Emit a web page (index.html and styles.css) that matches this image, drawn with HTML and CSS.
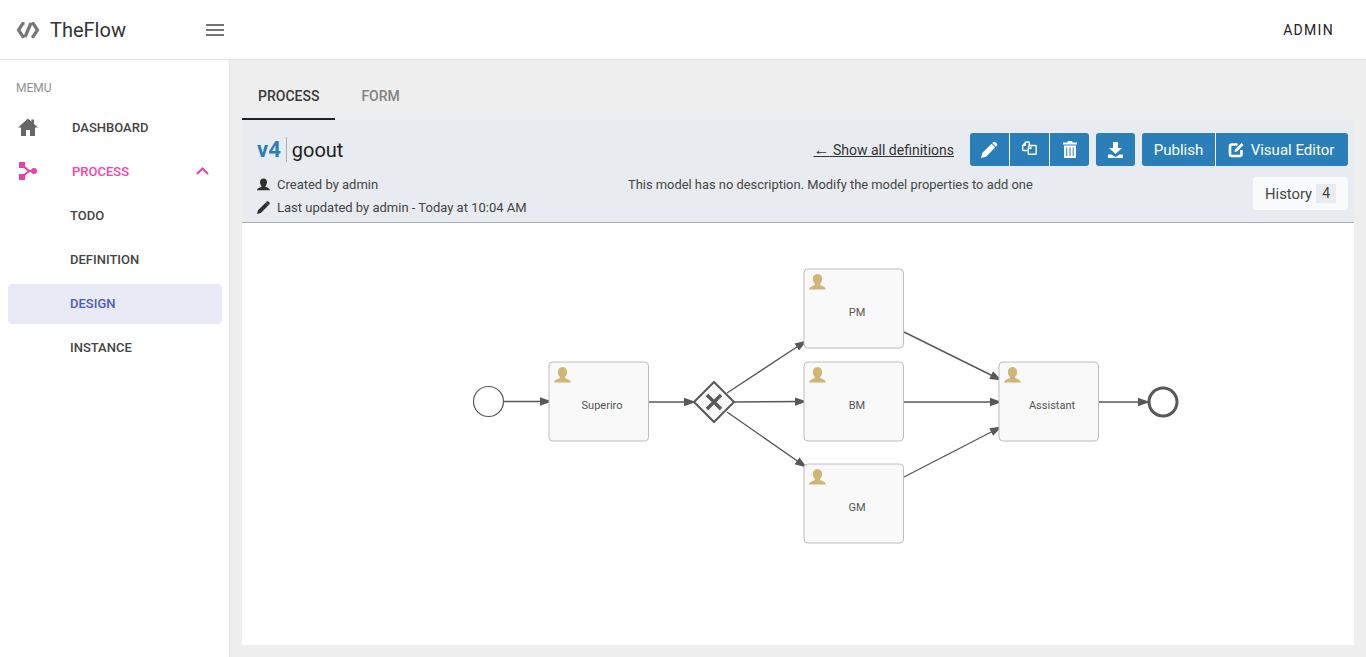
FILE: index.html
```html
<!DOCTYPE html>
<html lang="en">
<head>
<meta charset="utf-8">
<title>TheFlow</title>
<link rel="stylesheet" href="styles.css">
</head>
<body>
<svg width="0" height="0" class="defs">
  <defs>
    <marker id="arrow" viewBox="0 0 12 10" refX="11" refY="5" markerWidth="12" markerHeight="10" markerUnits="userSpaceOnUse" orient="auto">
      <path d="M0 0.8L12 5L0 9.2Z" fill="#585858"/>
    </marker>
    <g id="task-user">
      <path d="M8.5 0c3 0 4.6 2.2 4.6 5 0 2-.8 3.8-2 4.8v1.2c1.5 1 5.2 1.3 5.9 4.5H0c.7-3.2 4.4-3.5 5.9-4.5V9.8c-1.2-1-2-2.8-2-4.8 0-2.8 1.6-5 4.6-5z" fill="#d1b574"/>
    </g>
  </defs>
</svg>
<header class="topbar">
  <div class="brand">
    <svg class="logo" width="24" height="18" viewBox="0 0 24 18">
      <path d="M8.5 2.500H6.800L2.500 9l4.300 6.500h1.700M15.500 2.500h1.700L21.500 9l-4.300 6.500h-1.700" fill="none" stroke="#777" stroke-width="3.200"/>
      <path d="M15 2L9 16" fill="none" stroke="#777" stroke-width="3.200"/>
    </svg>
    <span class="brand-name">TheFlow</span>
  </div>
  <button class="burger" aria-label="menu"><span></span><span></span><span></span></button>
  <div class="user">ADMIN</div>
</header>
<div class="shell">
  <nav class="sidebar">
    <div class="menu-title">MEMU</div>
    <a class="nav-item">
      <svg class="nav-icon" width="20" height="18" viewBox="0 0 20 18"><path d="M10 .5L0 9.500h3V18h5v-6h4v6h5V9.500h3l-4-3.600V1.500h-2.500v2.200z" fill="#666"/></svg>
      <span>DASHBOARD</span>
    </a>
    <a class="nav-item nav-open">
      <svg class="nav-icon" width="20" height="20" viewBox="0 0 20 20"><path d="M4 4l7 6h6M4 16l7-6" fill="none" stroke="#ec40a4" stroke-width="2"/><rect x="1" y="1" width="6" height="6" fill="#ec40a4"/><rect x="1" y="13" width="6" height="6" fill="#ec40a4"/><circle cx="16" cy="10" r="3" fill="#ec40a4"/></svg>
      <span>PROCESS</span>
      <svg class="chevron" width="13" height="8" viewBox="0 0 13 8"><path d="M1 7l5.500-5.500L12 7" fill="none" stroke="#ec40a4" stroke-width="2"/></svg>
    </a>
    <div class="nav-subs">
      <a class="nav-sub">TODO</a>
      <a class="nav-sub">DEFINITION</a>
      <a class="nav-sub nav-active">DESIGN</a>
      <a class="nav-sub">INSTANCE</a>
    </div>
  </nav>
  <main class="main">
    <div class="tabs">
      <div class="tab tab-active">PROCESS</div>
      <div class="tab">FORM</div>
    </div>
    <section class="panel">
      <div class="panel-head">
        <div class="panel-row">
          <h1 class="title"><span class="version">v4</span><span class="name">goout</span></h1>
          <a class="back-link"><span class="arrow-glyph">←</span> Show all definitions</a>
          <div class="btn-group">
            <button class="btn btn-icon btn-narrow"><svg width="17" height="17" viewBox="0 0 17 17"><path d="M0 17l1.300-5L10.500 2.800l3.700 3.700L5 15.700zM12 1.300c.8-.8 1.700-.8 2.400-.1l1.400 1.400c.7.700.7 1.600-.1 2.400l-.8.800-3.700-3.700z" fill="#fff"/></svg></button>
            <button class="btn btn-icon btn-raised"><svg width="15" height="14" viewBox="0 0 15 14"><path d="M5.500 9.500H1.500c-.5 0-.8-.3-.8-.8V4.500L4 1h2.500c.5 0 .8.300.8.800V4" fill="none" stroke="#fff" stroke-width="1.400"/><path d="M7 4.500h6.500c.4 0 .7.300.7.700v7.300c0 .4-.3.700-.7.700h-6.500c-.4 0-.7-.3-.7-.7V7.500z" fill="none" stroke="#fff" stroke-width="1.400"/><path d="M1 5h3V1.500z" fill="#fff"/><path d="M6.500 8h3V4.700z" fill="#fff"/></svg></button>
            <button class="btn btn-icon"><svg width="14" height="17" viewBox="0 0 14 17"><path d="M5 0h4l.8 1.500H14V3.500H0V1.500h4.200zM1 4.500h12V16c0 .6-.4 1-1 1H2c-.6 0-1-.4-1-1z" fill="#fff"/><path d="M3.800 6.500v8.500M7 6.500v8.500M10.200 6.500v8.500" stroke="#2a7fb8" stroke-width="1"/></svg></button>
          </div>
          <div class="btn-group">
            <button class="btn btn-icon btn-narrow"><svg width="15" height="16" viewBox="0 0 15 16"><path d="M5 0h5v6h4L7.500 12 1 6h4zM0 12.500h3.500L7.500 15l4-2.500H15V16H0z" fill="#fff"/></svg></button>
          </div>
          <div class="btn-group">
            <button class="btn btn-text btn-publish">Publish</button>
            <button class="btn btn-text btn-editor"><svg width="17" height="16" viewBox="0 0 17 16"><path d="M9.500 2.500H4c-1.200 0-2 .8-2 2v7.500c0 1.200.8 2 2 2h7.500c1.200 0 2-.8 2-2V8" fill="none" stroke="#fff" stroke-width="2.600"/><path d="M6.500 10l.5-2.500L13.500 1l2 2L9 9.500z" fill="#fff"/></svg>Visual Editor</button>
          </div>
        </div>
        <div class="panel-row panel-row-meta">
          <div class="meta">
            <div class="meta-line"><svg width="13" height="13" viewBox="0 0 17 16"><path d="M8.500 0c3 0 4.600 2.200 4.600 5 0 2-.8 3.800-2 4.800v1.200c1.500 1 5.200 1.300 5.900 4.500H0c.7-3.200 4.400-3.500 5.900-4.500V9.800c-1.200-1-2-2.800-2-4.800 0-2.800 1.600-5 4.600-5z" fill="#2f2f2f"/></svg>Created by admin</div>
            <div class="meta-line"><svg width="13" height="13" viewBox="0 0 17 17"><path d="M0 17l1.300-5L11.500 1.800l3.700 3.700L5 15.700zM12.500.8c.8-.8 1.700-.8 2.400-.1l1.400 1.400c.7.700.7 1.600-.1 2.400l-.8.800-3.700-3.700z" fill="#2f2f2f"/></svg>Last updated by admin - Today at 10:04 AM</div>
          </div>
          <p class="description">This model has no description. Modify the model properties to add one</p>
          <div class="history">History<span class="count">4</span></div>
        </div>
      </div>
      <svg class="diagram" viewBox="242 223 1112 422" width="1112" height="422">
        <g class="edges">
          <path d="M504 401.500H551" marker-end="url(#arrow)"/>
          <path d="M649 402H695" marker-end="url(#arrow)"/>
          <path d="M727 393L806 341" marker-end="url(#arrow)"/>
          <path d="M734 402L806 401.500" marker-end="url(#arrow)"/>
          <path d="M727 412L806 467" marker-end="url(#arrow)"/>
          <path d="M904 332L1001 380" marker-end="url(#arrow)"/>
          <path d="M904 402H1001" marker-end="url(#arrow)"/>
          <path d="M904 477L1001 427" marker-end="url(#arrow)"/>
          <path d="M1099 402H1149" marker-end="url(#arrow)"/>
        </g>
        <circle class="start" cx="488.500" cy="401.500" r="15"/>
        <circle class="end" cx="1163" cy="402" r="14"/>
        <g class="gateway">
          <path d="M714 382L734 402L714 422L694 402Z"/>
          <path class="cross" d="M707 395L721 409M721 395L707 409"/>
        </g>
        <g class="task">
          <rect x="549" y="362" width="99.500" height="79" rx="4"/><use href="#task-user" x="554" y="367"/>
          <text x="602" y="409">Superiro</text>
        </g>
        <g class="task">
          <rect x="804" y="269" width="99.500" height="79" rx="4"/><use href="#task-user" x="809" y="274"/>
          <text x="857" y="316">PM</text>
        </g>
        <g class="task">
          <rect x="804" y="362" width="99.500" height="79" rx="4"/><use href="#task-user" x="809" y="367"/>
          <text x="857" y="409">BM</text>
        </g>
        <g class="task">
          <rect x="804" y="464" width="99.500" height="79" rx="4"/><use href="#task-user" x="809" y="469"/>
          <text x="857" y="511">GM</text>
        </g>
        <g class="task">
          <rect x="999" y="362" width="99.500" height="79" rx="4"/><use href="#task-user" x="1004" y="367"/>
          <text x="1052" y="409">Assistant</text>
        </g>
      </svg>
    </section>
  </main>
</div>
</body>
</html>
```
FILE: styles.css
```css
* { box-sizing: border-box; }
html, body { height: 100%; }
body {
  margin: 0;
  height: 657px;
  overflow: hidden;
  font-family: Roboto, "Liberation Sans", sans-serif;
  color: #333;
  background: #eee;
  display: flex;
  flex-direction: column;
}
.defs { position: absolute; }

.topbar {
  height: 60px;
  flex: none;
  display: flex;
  align-items: center;
  background: #fff;
  border-bottom: 1px solid #e2e2e2;
  padding-left: 16px;
  padding-right: 32px;
}
.brand { display: flex; align-items: center; width: 190px; }
.logo { flex: none; margin-right: 10px; }
.brand-name { font-size: 20px; color: #333; }
.burger {
  width: 18px; height: 12px; padding: 0; border: 0; background: none;
  display: flex; flex-direction: column; justify-content: space-between;
}
.burger span { display: block; height: 2px; background: #757575; }
.user { margin-left: auto; font-size: 14px; font-weight: 400; letter-spacing: 1.300px; color: #222; }

.shell { flex: 1; display: flex; min-height: 0; }
.sidebar {
  width: 230px;
  flex: none;
  background: #fff;
  border-right: 1px solid #e2e2e2;
  padding: 0 7px 0 8px;
}
.menu-title { height: 45px; padding: 21px 0 0 8px; font-size: 12px; color: #909090; }
.nav-item {
  height: 44px;
  display: flex;
  align-items: center;
  padding-left: 10px;
  font-size: 13px;
  font-weight: 500;
  color: #444;
}
.nav-icon { flex: none; margin-right: 34px; }
.nav-open { color: #f046ab; }
.chevron { margin-left: auto; margin-right: 13px; }
.nav-subs { display: flex; flex-direction: column; gap: 4px; margin-top: 3px; }
.nav-sub {
  display: flex;
  align-items: center;
  height: 40px;
  padding-left: 62px;
  padding-bottom: 2px;
  font-size: 13px;
  font-weight: 500;
  color: #444;
  border-radius: 4px;
}
.nav-active { background: #e8eaf6; color: #4a5bbd; }

.main { flex: 1; min-width: 0; padding: 12px; display: flex; flex-direction: column; }
.tabs { display: flex; height: 48px; flex: none; }
.tab {
  display: flex; align-items: center;
  padding: 0 16px;
  font-size: 14px;
  font-weight: 500;
  color: #828282;
  margin-right: 10px;
  height: 48px;
}
.tab-active { color: #3a3a3a; border-bottom: 2px solid #212121; padding-top: 2px; }
.panel { flex: 1; min-height: 0; background: #fff; display: flex; flex-direction: column; }
.panel-head {
  height: 103px;
  flex: none;
  background: #e8ecf1;
  border-bottom: 1px solid #a4aebf;
  padding: 13px 6px 0 15px;
}
.panel-row { display: flex; align-items: center; height: 33px; }
.title { margin: 0; display: flex; align-items: center; font-weight: 400; margin-right: auto; }
.version { font-size: 22px; font-weight: 700; color: #2a7fb8; padding-right: 5px; border-right: 1px solid #a9b2bd; line-height: 25px; }
.name { font-size: 20px; color: #222; padding-left: 5px; }
.back-link { font-size: 14px; color: #333; text-decoration: underline; margin-right: 16px; }
.arrow-glyph { font-family: "Liberation Sans", sans-serif; font-size: 16px; line-height: 1; }
.btn-group { display: flex; margin-right: 7px; border-radius: 3px; overflow: hidden; height: 33px; }
.btn-group:last-child { margin-right: 0; }
.btn {
  border: 0; margin: 0; padding: 0;
  background: #2a7fb8;
  color: #fff;
  font-family: inherit;
  font-size: 15px;
  height: 33px;
  display: flex; align-items: center; justify-content: center;
  border-left: 1px solid #fff;
}
.btn:first-child { border-left: 0; }
.btn-icon { width: 40px; }
.btn-narrow { width: 39px; }
.btn-raised { padding-bottom: 4px; }
.btn-publish { width: 73px; }
.btn-editor { width: 133px; padding-right: 2px; }
.btn-editor svg { margin-right: 6px; }
.panel-row-meta { align-items: flex-start; height: auto; }
.meta { width: 371px; flex: none; padding-top: 7px; }
.meta-line { display: flex; align-items: center; height: 23px; font-size: 13px; color: #444; line-height: 1; }
.meta-line svg { margin-right: 7px; flex: none; }
.description { margin: 0; padding-top: 11px; font-size: 12.900px; color: #444; flex: 1; }
.history {
  margin-top: 11px;
  width: 95px; height: 33px;
  background: #f9fafb;
  border-radius: 3px;
  display: flex; align-items: center;
  padding-left: 12px;
  font-size: 14.800px;
  color: #444;
}
.count { background: #e8ecf1; margin-left: 4px; width: 20px; text-align: center; line-height: 19px; font-size: 14px; }

.diagram { display: block; flex: none; background: #fff; }
.edges path { fill: none; stroke: #585858; stroke-width: 1.400; }
.start { fill: #fff; stroke: #585858; stroke-width: 1.200; }
.end { fill: #fff; stroke: #585858; stroke-width: 3; }
.gateway path { fill: #f9f9f9; stroke: #585858; stroke-width: 2; }
.gateway .cross { fill: none; stroke-width: 3.400; }
.task rect { fill: #f9f9f9; stroke: #bdbdbd; stroke-width: 1; }
.task text { font-family: Roboto, sans-serif; font-size: 11px; fill: #555; text-anchor: middle; }
```
